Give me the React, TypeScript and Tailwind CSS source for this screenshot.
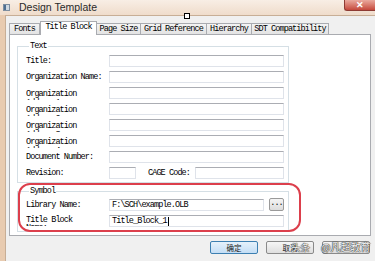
import React from "react";

const mono = "font-['Liberation_Mono',monospace] text-[8.5px] tracking-[-0.9px] text-black";

function Input({ className = "", children }: { className?: string; children?: React.ReactNode }) {
  return (
    <div
      className={
        "h-[12px] bg-white border border-[#dfe3ea] border-t-[#abadb3] flex items-center pl-[2px] overflow-hidden " +
        mono +
        " " +
        className
      }
    >
      {children}
    </div>
  );
}

function Row({ label, children }: { label: React.ReactNode; children?: React.ReactNode }) {
  return (
    <div className="h-[12px] flex items-center">
      <div className={"w-[83px] shrink-0 " + mono}>{label}</div>
      {children ?? <Input className="flex-1" />}
    </div>
  );
}

function WrapRow({ first, second }: { first: string; second: string }) {
  return (
    <div className="h-[12px] flex items-start">
      <div className={"w-[83px] shrink-0 h-[13px] overflow-hidden pt-[3px] leading-[9px] " + mono}>
        <div>{first}</div>
        <div>{second}</div>
      </div>
      <Input className="flex-1" />
    </div>
  );
}

function Tab({ label, w, active }: { label: string; w: string; active?: boolean }) {
  if (active) {
    return (
      <div
        className={
          "h-[14px] -mb-[1px] relative z-10 bg-white border border-b-0 border-[#a9abb0] flex items-center justify-center pb-[2px] " +
          w
        }
      >
        <span className={mono}>{label}</span>
      </div>
    );
  }
  return (
    <div
      className={
        "h-[11px] bg-linear-to-b from-[#f4f4f4] to-[#e3e3e3] border border-b-0 border-l-0 border-[#a9abb0] flex items-center justify-center " +
        w
      }
    >
      <span className={mono}>{label}</span>
    </div>
  );
}

function Btn({ label, def }: { label?: string; def?: boolean }) {
  return (
    <div
      className={
        "w-[48px] h-[13px] rounded-[2px] border flex items-center justify-center text-[7.5px] font-['Noto_Sans_CJK_SC',sans-serif] text-[#222] " +
        (def
          ? "border-[#3c7fb1] bg-linear-to-b from-[#e5f1fb] to-[#c4def5]"
          : "border-[#8a8a8a] bg-linear-to-b from-[#f6f6f6] to-[#dedede]")
      }
    >
      {label}
    </div>
  );
}

export default function App() {
  return (
    <div className="w-[375px] h-[261px] relative overflow-hidden bg-[#e8cbb0] flex flex-col">
      {/* Title bar */}
      <div className="h-[15px] shrink-0 flex items-center bg-linear-to-b from-[#f8eee5] to-[#efdccb]">
        <div className="ml-[3px] w-[7px] h-[7px] bg-[#cfd9e2] border border-[#7d8ea0] flex">
          <div className="w-[2px] bg-[#4e6f91]" />
        </div>
        <span className="ml-[9px] text-[10.5px] leading-none text-[#2a2a2a] font-['Liberation_Sans',sans-serif]">
          Design Template
        </span>
      </div>

      {/* Body */}
      <div className="flex-1 ml-[5px] bg-[#f0f0f0] border-l border-t border-[#c7ae96] pl-[3px] pt-[5px] flex flex-col">
        {/* Tabs */}
        <div className="h-[13px] flex items-end">
          <div className="h-[11px] w-[31px] bg-linear-to-b from-[#f4f4f4] to-[#e3e3e3] border border-b-0 border-[#a9abb0] flex items-center justify-center">
            <span className={mono}>Fonts</span>
          </div>
          <Tab label="Title Block" w="w-[57px]" active />
          <Tab label="Page Size" w="w-[44px]" />
          <Tab label="Grid Reference" w="w-[66px]" />
          <Tab label="Hierarchy" w="w-[45px]" />
          <Tab label="SDT Compatibility" w="w-[77px]" />
        </div>

        {/* Panel */}
        <div className="w-[362px] bg-white border border-[#a9abb0] pt-[6px] pl-[7px] pb-[3px]">
          <fieldset className="w-[272px] border border-[#d5dfe5] pl-[8px] pr-[4px] pb-[3px]">
            <legend className={"ml-[3px] px-[1px] leading-[10px] " + mono}>Text</legend>
            <div className="pt-[4px] flex flex-col gap-[4px]">
              <Row label="Title:" />
              <Row label="Organization Name:" />
              <WrapRow first="Organization" second="Address1:" />
              <WrapRow first="Organization" second="Address2:" />
              <WrapRow first="Organization" second="Address3:" />
              <WrapRow first="Organization" second="Address4:" />
              <Row label="Document Number:" />
              <Row label="Revision:">
                <Input className="w-[27px]" />
                <div className={"w-[59px] pl-[12px] shrink-0 " + mono}>CAGE Code:</div>
                <Input className="flex-1" />
              </Row>
            </div>
          </fieldset>

          <fieldset className="mt-[3px] w-[272px] border border-[#d5dfe5] pl-[8px] pr-[4px] pb-[4px]">
            <legend className={"ml-[3px] px-[1px] leading-[10px] " + mono}>Symbol</legend>
            <div className="pt-[3px] flex flex-col gap-[4px]">
              <Row label="Library Name:">
                <Input className="flex-1">F:\SCH\example.OLB</Input>
                <div className="ml-[5px] -mt-[1px] w-[15px] h-[13px] border border-[#9a9a9a] rounded-[2px] bg-linear-to-b from-[#f4f4f4] to-[#dcdcdc] flex items-center justify-center">
                  <span className={mono + " leading-none -mt-[3px]"}>...</span>
                </div>
              </Row>
              <div className="h-[12px] flex items-start">
                <div className={"w-[83px] shrink-0 h-[11px] overflow-hidden pt-[1px] leading-[8px] " + mono}>
                  <div>Title Block</div>
                  <div>Name:</div>
                </div>
                <Input className="flex-1">
                  Title_Block_1<span className="ml-[1px] w-0 h-[9px] border-l border-black" />
                </Input>
              </div>
            </div>
          </fieldset>
        </div>

        {/* Buttons */}
        <div className="mt-[5px] pl-[201px] flex">
          <Btn label="确定" def />
          <div className="ml-[8px]">
            <Btn label="取消" />
          </div>
          <div className="ml-[8px]">
            <Btn />
          </div>
        </div>
      </div>

      {/* Close button */}
      <div className="absolute right-0 top-0 w-[31px] h-[11px] rounded-bl-[3px] bg-linear-to-b from-[#e9a99e] to-[#c4473c] border border-[#8e3b33] border-t-0 border-r-0 flex items-center justify-center">
        <span className="text-white text-[9px] leading-none font-bold font-['Liberation_Sans',sans-serif]">✕</span>
      </div>

      {/* Small resize handle square */}
      <div className="absolute left-[184px] top-[13px] w-[6px] h-[6px] bg-white border border-black" />

      {/* Red annotation */}
      <div className="absolute left-[18px] top-[183px] w-[283px] h-[49px] rounded-[12px] border-2 border-[#dc3f4c]" />

      {/* Watermark */}
      <div className="absolute left-[291px] top-[240px] flex items-baseline font-['Noto_Sans_CJK_SC',sans-serif] text-[#f4f4f4] [text-shadow:0_0_1px_#333,0_0_1px_#333,0_0_1px_#333]">
        <span className="text-[9.5px] leading-[14px]">头条</span>
        <span className="ml-[11px] text-[10px] leading-[14px]">@凡超教育</span>
      </div>
    </div>
  );
}
